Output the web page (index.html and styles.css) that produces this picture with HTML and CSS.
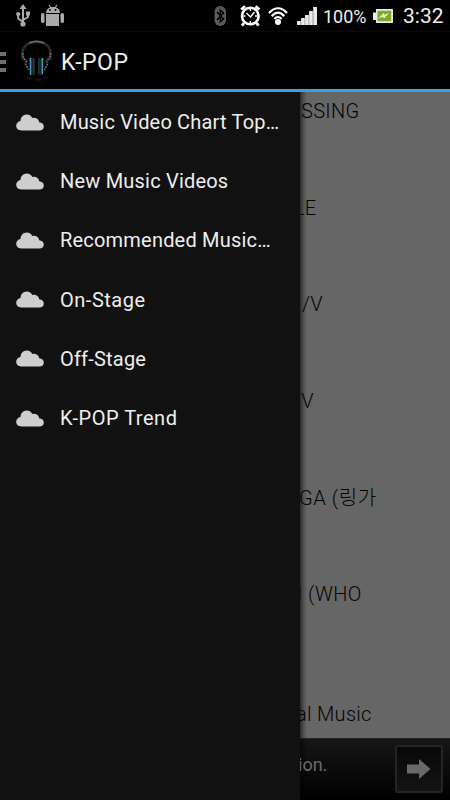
FILE: index.html
```html
<!DOCTYPE html>
<html lang="en">
<head>
<meta charset="utf-8">
<title>K-POP</title>
<link rel="stylesheet" href="styles.css">
</head>
<body>
<svg width="0" height="0" class="defs"><symbol id="cloud" viewBox="0 0 28 17"><path d="M5.300 16.500C2.200 16.500.2 14.400.2 11.800c0-2.500 1.800-4.300 4.300-4.800C4.500 3.200 7.200.4 10.800.4c2.600 0 4.500 1.400 5.400 3.600 3.400-.8 6.600.8 7 4.300 2.700.2 4.600 1.900 4.600 4.100 0 2.400-1.700 4.100-4.300 4.100z" fill="#cecece"/></symbol></svg>
<header class="status">
  <svg class="usb" width="16" height="24" viewBox="0 0 16 24" fill="none" stroke="#aaa" stroke-width="2"><path d="M7 5v15M2.200 11v3.500L7 18M12 10v3L7 16"/><g fill="#aaa" stroke="none"><path d="M7 0l3.500 5h-7zM10 7.500h4v4h-4z"/><circle cx="2.200" cy="10" r="2.100"/><circle cx="7" cy="20" r="2.600"/></g></svg>
  <svg class="droid" width="24" height="24" viewBox="0 0 24 24" fill="#aaa"><path d="M5 9c0-3 2-5 4-5.500L7.500 1l.8-.4L10 3h4L15.700.6l.8.400L15 3.500c2 .5 4 2.500 4 5.500zM5 10h13v12H5z"/><rect x="0" y="9" width="3.500" height="10" rx="1.700"/><rect x="19.500" y="9" width="3.500" height="10" rx="1.700"/><circle cx="9" cy="6" r=".9" fill="#000"/><circle cx="14.500" cy="6" r=".9" fill="#000"/></svg>
  <span class="fill"></span>
  <svg class="bt" width="13" height="20" viewBox="0 0 13 20"><rect x=".5" width="11.500" height="20" rx="5.700" fill="#5b5b5b"/><path d="M3 6l6.500 7L6.300 16V4l3.200 3L3 14" fill="none" stroke="#000" stroke-width="1.500"/></svg>
  <svg class="alarm" width="21" height="22" viewBox="0 0 21 22" fill="none" stroke="#fff"><circle cx="10.300" cy="11" r="8.300" stroke-width="2.600"/><path d="M1.200 4.500L5 1.200M19.400 4.500l-3.800-3.300M4 18l-2 2.700M16.500 18l2 2.700" stroke-width="2.800"/><path d="M6.500 8l4 4L14.500 7M10.300 4v2M10.300 16v2M3.500 11h2M15 11h2" stroke-width="1.400"/></svg>
  <svg class="wifi" width="20" height="20" viewBox="0 0 20 20" fill="none" stroke="#fff" stroke-width="2.200"><path d="M1 7Q10-2.500 19 7M3.700 10.200Q10 3.200 16.300 10.200M6.300 13Q10 9 13.700 13"/><circle cx="10" cy="16" r="3" fill="#fff" stroke="none"/></svg>
  <svg class="signal" width="20" height="18" viewBox="0 0 20 18"><path d="M0 14h4v4H0zM4 11h4v7H4zM8 8h4v10H8zM12 4h4v14h-4zM16 0h4v18h-4z" fill="#999"/><path d="M0 14h3.400v4H0zM4.300 11h3.200v7H4.300zM8.300 8h3.200v10H8.300zM12.300 4h3.200v14h-3.200zM16.500 0H20v18h-3.500z" fill="#e8e8e8"/></svg>
  <span class="percent">100%</span>
  <svg class="battery" width="20" height="14" viewBox="0 0 20 14"><path d="M3 0h17v14H3v-3H0V3.500h3z" fill="#e8e8e8"/><path d="M4.500 1.800h13.700v10.400H4.500z" fill="#78ae20"/><path d="M5.500 9.500L11 4l.5 2.200L16 3.500l-5 6-1-2z" fill="#fff"/></svg>
  <span class="clock">3:32</span>
</header>
<div class="actionbar">
  <div class="burger"><i></i><i></i><i></i></div>
  <svg class="logo" width="32" height="42" viewBox="0 0 32 42" fill="none"><path d="M2 20C-1 6 7 2 15.500 2S32 6 29 20" stroke="#2b2e31" stroke-width="2.500"/><path d="M8 3Q15.500-.5 23 3" stroke="#707070" stroke-width="1.500"/><path d="M1.500 13l1 5 3 3-1 3 3 6M29.500 13l-1 5-3 3 1 3-3 6" stroke="#666" stroke-width="1.800" stroke-dasharray="2 1"/><path d="M8 18h6v17H9zM17 18h6l-1 17h-5z" fill="#1b2228"/><path d="M9.500 18v17M21.300 18v16" stroke="#4598c0" stroke-width="1.400"/><path d="M12.500 19v14M18 19v14" stroke="#2e363c"/><path d="M5 37l6 2M15 40h6M23 38l4-1" stroke="#30363a" stroke-dasharray="2 1"/></svg>
  <h1>K-POP</h1>
</div>
<main>
  <nav>
    <a><svg><use href="#cloud"/></svg><span class="n1">Music Video Chart Top…</span></a>
    <a><svg><use href="#cloud"/></svg><span class="n2">New Music Videos</span></a>
    <a><svg><use href="#cloud"/></svg><span class="n2">Recommended Music…</span></a>
    <a><svg><use href="#cloud"/></svg><span class="n4">On-Stage</span></a>
    <a><svg><use href="#cloud"/></svg><span class="n2">Off-Stage</span></a>
    <a><svg><use href="#cloud"/></svg><span class="n4">K-POP Trend</span></a>
  </nav>
  <section>
    <div class="list">
      <p class="r1">SSING</p>
      <p class="r2">LE</p>
      <p class="r3">/V</p>
      <p class="r4">/V</p>
      <p class="r5">GA (링가</p>
      <p class="r6">I (WHO</p>
      <p class="r7">al Music</p>
    </div>
    <footer><span>ion.</span><b><svg width="24" height="20" viewBox="0 0 24 20"><path d="M0 5.500h12V0l11.500 10L12 20v-5.500H0z" fill="#696969"/></svg></b></footer>
  </section>
</main>
</body>
</html>
```
FILE: styles.css
```css
* { box-sizing: border-box; }
body { margin: 0; width: 450px; height: 800px; overflow: hidden; background: #000; color: #eee; font-family: Roboto, "Noto Sans CJK KR", sans-serif; display: flex; flex-direction: column; }
svg { display: block; flex: none; }
.defs { display: none; }
.status { height: 32px; flex: none; display: flex; align-items: center; border-bottom: 1px solid #090909; white-space: nowrap; }
.usb { margin-left: 16px; }
.droid { margin-left: 9px; }
.fill { flex: 1; }
.bt { margin-right: 13px; }
.alarm { margin-right: 7px; }
.wifi { margin-right: 9px; }
.signal { margin-right: 6px; }
.percent { width: 44px; font-size: 18px; padding-top: 2px; }
.battery { margin: 1px 10px 0 6px; }
.clock { width: 47px; font-size: 21px; padding-top: 1px; }
.actionbar { height: 60px; flex: none; display: flex; align-items: center; border-bottom: 3px solid #33a5d7; }
.burger { width: 6px; display: grid; gap: 4px; margin: 3px 15px 0 0; }
.burger i { height: 4px; background: #707070; }
h1 { margin: 3px 0 0 8px; font-size: 23px; font-weight: 400; letter-spacing: .5px; }
main { height: 708px; display: grid; grid-template-columns: 300px 150px; }
nav { background: #111; padding-top: .5px; }
nav a { height: 59.200px; display: flex; align-items: center; padding-left: 16px; gap: 16px; font-size: 20px; white-space: nowrap; }
nav a svg { width: 28px; height: 17px; }
.n1 { letter-spacing: .18px; }
.n2 { letter-spacing: .2px; }
.n4 { letter-spacing: .52px; }
section { overflow: hidden; display: flex; flex-direction: column; background: linear-gradient(90deg, #0009, #0004 3px, #0000 7px) #666; }
.list { height: 646px; }
p { margin: 0; height: 96.700px; padding-top: 6px; line-height: 26px; font-size: 20px; font-weight: 300; color: #040404; white-space: nowrap; letter-spacing: .3px; }
.r1 { text-indent: 1px; }
.r2 { text-indent: -6px; }
.r3 { text-indent: 2px; }
.r4 { text-indent: -7px; }
.r5 { text-indent: -1px; letter-spacing: .6px; }
.r6 { text-indent: -3px; height: 120px; letter-spacing: .4px; }
.r7 { text-indent: -4px; }
footer { height: 62px; border-top: 1px solid #222; background: linear-gradient(90deg, #0008, #0000 7px), linear-gradient(#161616, #000); display: flex; justify-content: space-between; padding: 6px 7px 0 0; }
footer span { color: #696969; font-size: 18px; line-height: 40px; text-indent: -2px; }
footer b { width: 48px; height: 48px; border: 2px solid #242424; border-radius: 3px; background: linear-gradient(#080808, #141414); display: grid; place-items: center; }
```
